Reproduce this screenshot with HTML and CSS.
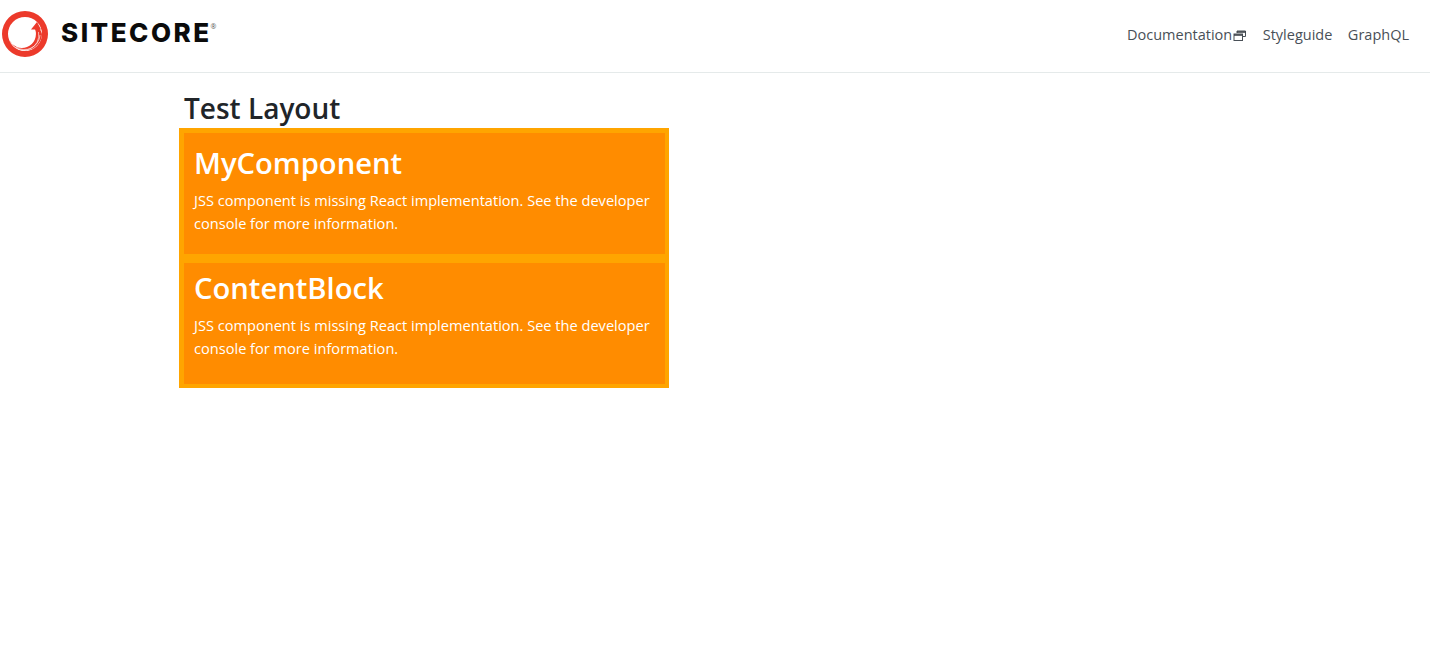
FILE: index.html
```html
<!DOCTYPE html>
<html lang="en">
<head>
<meta charset="utf-8">
<title>Test Layout</title>
<link rel="stylesheet" href="styles.css">
</head>
<body>
<header class="topbar">
  <a class="brand" href="#">
    <svg class="brand-mark" viewBox="0 0 46 46" width="46" height="46" aria-hidden="true">
      <path fill-rule="evenodd" d="M23 0a23 23 0 1 0 0 46a23 23 0 1 0 0-46ZM23 6a17 17 0 1 1 0 34a17 17 0 1 1 0-34Z" fill="#ec3a2b"/>
      <path d="M7 28 A17 17 0 0 0 40 23 A17 17 0 0 0 37 17 L33 18 A13 13 0 0 1 7 28Z" fill="#ec3a2b"/>
      <path d="M9 32 A15 15 0 0 0 36.500 21 M14 36 A15.500 15.500 0 0 0 38 24" fill="none" stroke="#fff" stroke-width=".7" stroke-opacity=".85"/>
      <path d="M35 11 L29 18.500 L39 18.500 Z" fill="#ec3a2b"/>
    </svg>
    <span class="brand-name">SITECORE</span><span class="brand-reg">®</span>
  </a>
  <nav class="nav">
    <a class="nav-link" href="#">Documentation<svg class="ext-icon" viewBox="0 0 13 11" width="13" height="11" aria-hidden="true"><path d="M4 3V1h8.500v5.500H9.500" fill="none" stroke="#495057" stroke-width="1"/><path d="M4 2h8.500" stroke="#343a40" stroke-width="1.500"/><rect x="1" y="4" width="8.500" height="6.500" fill="none" stroke="#495057" stroke-width="1"/><path d="M1 5h8.500" stroke="#343a40" stroke-width="1.500"/></svg></a>
    <a class="nav-link" href="#">Styleguide</a>
    <a class="nav-link" href="#">GraphQL</a>
  </nav>
</header>
<main class="page">
  <h1 class="page-title">Test Layout</h1>
  <section class="placeholder">
    <article class="missing">
      <h2 class="missing-title">MyComponent</h2>
      <p class="missing-text">JSS component is missing React implementation. See the developer console for more information.</p>
    </article>
    <article class="missing missing-tight">
      <h2 class="missing-title">ContentBlock</h2>
      <p class="missing-text">JSS component is missing React implementation. See the developer console for more information.</p>
    </article>
  </section>
</main>
</body>
</html>
```
FILE: styles.css
```css
* { box-sizing: border-box; }
html, body { margin: 0; padding: 0; }
body {
  background: #fff;
  color: #212529;
  font-family: "Open Sans", "Noto Sans", sans-serif;
}
a { text-decoration: none; color: inherit; }
.topbar {
  height: 73px;
  display: flex;
  align-items: center;
  justify-content: space-between;
  border-bottom: 1px solid #e5eaea;
  padding: 0 21px 5px 2px;
}
.brand { display: flex; align-items: center; }
.brand-mark { display: block; }
.brand-name {
  margin: -2px 0 0 13px;
  font-family: Inter, "Liberation Sans", sans-serif;
  font-weight: 800;
  font-size: 26px;
  letter-spacing: 2.500px;
  color: #0b0b0b;
}
.brand-reg { font-size: 7px; color: #555; margin: -14px 0 0 -1px; }
.nav { display: flex; gap: 15.500px; padding-top: 1px; }
.nav-link {
  font-size: 14.500px;
  color: #495057;
  display: flex;
  align-items: center;
}
.ext-icon { margin: 3px 1px 0 1px; }
.page { padding: 17px 0 0 179px; }
.page-title {
  margin: 0 0 1px;
  padding-left: 5px;
  font-size: 28px;
  line-height: 37px;
  font-weight: 600;
}
.placeholder {
  width: 489.500px;
  background: #ffa500;
  padding: 5px 4px 4px 5px;
  display: flex;
  flex-direction: column;
  gap: 9px;
}
.missing {
  background: #ff8c00;
  color: #fff;
  height: 121px;
  padding: 10px;
}
.missing-tight { padding-top: 5px; }
.missing-title {
  margin: 0 0 6px;
  font-size: 29.200px;
  line-height: 40px;
  font-weight: 600;
}
.missing-text {
  margin: 0;
  font-size: 14.600px;
  line-height: 23px;
}
```
